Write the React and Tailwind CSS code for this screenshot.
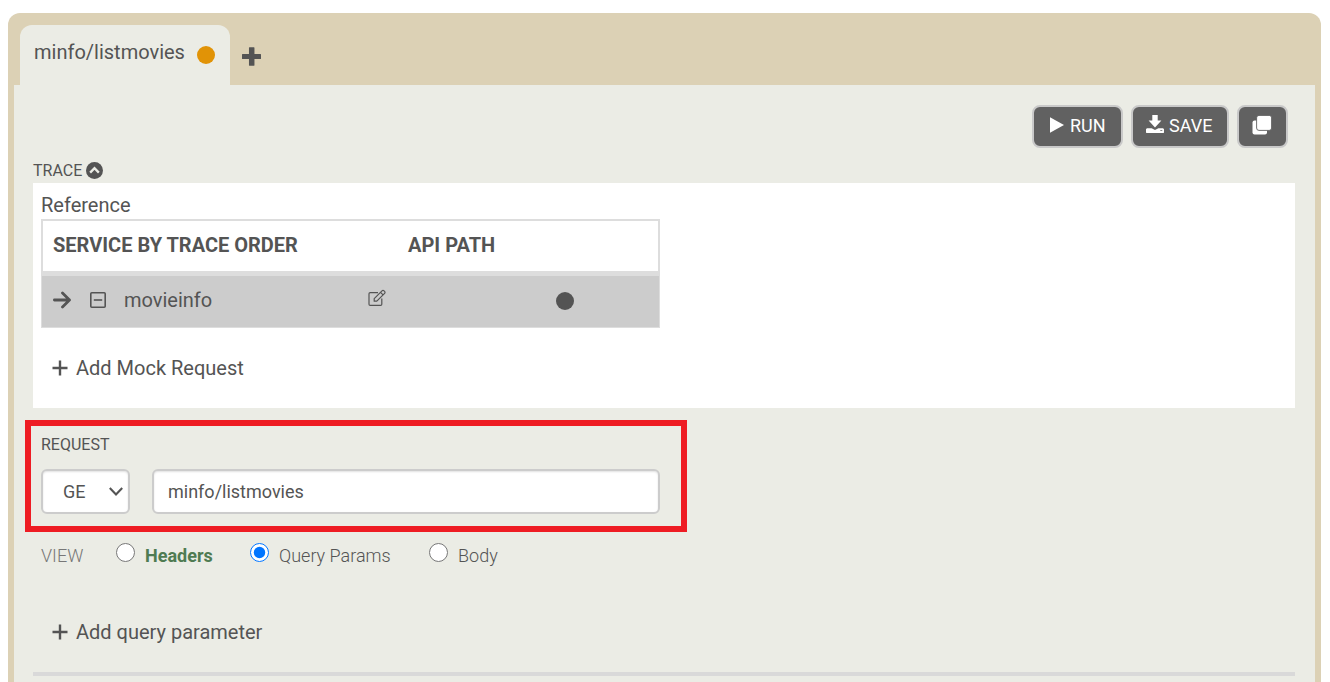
import React, { useState } from "react";

function PlusIcon({ className, weight }) {
  return (
    <svg viewBox="0 0 16 16" className={className} fill="none" stroke="currentColor" strokeWidth={weight} aria-hidden="true">
      <path d="M8 0.5v15M0.5 8h15" />
    </svg>
  );
}

function ThickPlusIcon() {
  return (
    <svg viewBox="0 0 18 18" className="size-[19px]" fill="currentColor" aria-hidden="true">
      <path d="M7 0.3h4.4a.4.4 0 0 1 .4.4V6.6h5.7a.5.5 0 0 1 .5.5v3.8a.5.5 0 0 1-.5.5h-5.7v6a.4.4 0 0 1-.4.4H7a.4.4 0 0 1-.4-.4v-6H.5a.5.5 0 0 1-.5-.5V7.1a.5.5 0 0 1 .5-.5h6.1V.7A.4.4 0 0 1 7 .3z" />
    </svg>
  );
}

function ToolButton({ label, children, className }) {
  return (
    <button
      type="button"
      aria-label={label}
      className={
        "flex h-[43px] items-center rounded-lg border-2 border-[#c9c9c9] bg-[#616161] pb-0.5 text-lg leading-6 text-white " + className
      }
    >
      {children}
    </button>
  );
}

function AddButton({ children }) {
  return (
    <button type="button" className="flex items-center gap-2 text-xl leading-7">
      <PlusIcon className="size-4" weight="2.4" />
      {children}
    </button>
  );
}

const views = [
  { id: "headers", label: "Headers", text: "font-bold text-[#4f7b52]", width: "w-[134px]" },
  { id: "query", label: "Query Params", text: "font-light", width: "w-[179px]" },
  { id: "body", label: "Body", text: "font-light", width: "" },
];

export default function App() {
  const [view, setView] = useState("query");
  const [path, setPath] = useState("minfo/listmovies");

  return (
    <div className="min-h-screen bg-white pt-[13px] pr-[9px] pl-2 font-['Roboto','Liberation_Sans',sans-serif] text-[#545454]">
      <div className="rounded-t-xl bg-[#dcd1b5] px-1.5 pt-3">
        <nav className="flex h-[60px] pl-1.5">
          <button type="button" className="flex w-[210px] items-center justify-between rounded-t-xl bg-[#ebece5] pr-[15px] pl-[14px] text-xl leading-6">
            <span className="pb-1.5">minfo/listmovies</span>
            <span className="size-[18px] rounded-full bg-[#e19306]" />
          </button>
          <button type="button" aria-label="New tab" className="px-3 pt-[3px]">
            <ThickPlusIcon />
          </button>
        </nav>

        <main className="bg-[#ebece5] pt-5 pr-5 pb-[6px] pl-[19px]">
          <div className="flex justify-end gap-2 pr-[7px]">
            <ToolButton className="w-[91px] gap-1.5 pl-4">
              <svg viewBox="0 0 14 16" className="mb-0.5 h-4 w-[14px]" fill="currentColor" aria-hidden="true">
                <path d="M0 .2v15.6L14 8z" />
              </svg>
              RUN
            </ToolButton>
            <ToolButton className="w-[98px] gap-[5px] pl-[13px]">
              <svg viewBox="0 0 18 18" className="mb-1 size-[18px]" fill="currentColor" aria-hidden="true">
                <path d="M6.3 0h5.4v5.6h3.7L9 12.4 2.6 5.6h3.7z" />
                <path fillRule="evenodd" d="M.9 13.2h4.7L9 15l3.4-1.8h4.7l.9 1v3.2l-.5.6H.5l-.5-.6v-3.2zM14.3 15.2v.8h2v-.8z" />
              </svg>
              SAVE
            </ToolButton>
            <ToolButton label="Duplicate" className="w-[51px] justify-center">
              <svg viewBox="0 0 20 20" className="mr-0.5 mb-0.5 size-5" aria-hidden="true">
                <rect x="0.5" y="5.5" width="14.5" height="14" rx="2" fill="white" />
                <rect x="4.6" y="0.4" width="15" height="15" rx="2.4" fill="white" stroke="#616161" strokeWidth="0.9" />
              </svg>
            </ToolButton>
          </div>

          <button type="button" className="mt-[11px] flex h-6 items-center gap-1 text-base leading-6">
            TRACE
            <svg viewBox="0 0 18 18" className="mb-0.5 size-[17px]" aria-hidden="true">
              <circle cx="9" cy="9" r="9" fill="currentColor" />
              <path d="M4.4 11.2 9 6.6l4.6 4.6" fill="none" stroke="#ebece5" strokeWidth="2.5" />
            </svg>
          </button>

          <section className="h-[225px] bg-white px-2 pt-2">
            <h2 className="text-xl leading-7">Reference</h2>
            <table className="w-[619px] table-fixed border-separate border-spacing-0 border border-[#ddd] text-left text-xl leading-7">
              <colgroup>
                <col className="w-[356px]" />
                <col className="w-[147px]" />
                <col />
              </colgroup>
              <thead>
                <tr className="h-14">
                  <th className="border-t border-b-[5px] border-l border-[#ddd] px-2.5 pb-0.5 font-bold">SERVICE BY TRACE ORDER</th>
                  <th className="border-t border-b-[5px] border-[#ddd] px-2.5 pb-0.5 font-bold">API PATH</th>
                  <th className="border-t border-r border-b-[5px] border-[#ddd]" aria-label="Status" />
                </tr>
              </thead>
              <tbody>
                <tr className="h-[51px] bg-[#ccc]">
                  <td className="px-[11px] pb-1">
                    <div className="flex items-center">
                      <svg viewBox="0 0 18 18" className="size-[18px]" fill="none" stroke="currentColor" strokeWidth="2.8" strokeLinecap="round" strokeLinejoin="round" aria-hidden="true">
                        <path d="M1.4 9h15M9.5 2l7 7-7 7" />
                      </svg>
                      <svg viewBox="0 0 16 16" className="ml-[19px] size-4" fill="none" stroke="currentColor" strokeWidth="1.6" aria-hidden="true">
                        <rect x="0.8" y="0.8" width="14.4" height="14.4" rx="1" />
                        <path d="M3.8 8h8.4" />
                      </svg>
                      <span className="ml-[18px]">movieinfo</span>
                      <svg viewBox="0 0 18 18" className="mr-px mb-1 ml-auto size-[18px]" fill="none" stroke="currentColor" strokeWidth="1.2" strokeLinejoin="round" aria-hidden="true">
                        <path d="M10 3.6H2.2A1.2 1.2 0 0 0 1 4.8v10.4a1.2 1.2 0 0 0 1.2 1.2h10.4a1.2 1.2 0 0 0 1.2-1.2V9.6" />
                        <path d="M6.2 12.2V9.6L14 1.8a1.4 1.4 0 0 1 2 0l.6.6a1.4 1.4 0 0 1 0 2L8.8 12.2zM12.5 3.3l2.6 2.6" />
                      </svg>
                    </div>
                  </td>
                  <td />
                  <td className="px-[11px] pb-0.5">
                    <span className="block size-[18px] rounded-full bg-[#545454]" />
                  </td>
                </tr>
              </tbody>
            </table>
            <div className="pt-[26px] pl-[11px]">
              <AddButton>Add Mock Request</AddButton>
            </div>
          </section>

          <section className="mt-3 -ml-2 h-28 w-[662px] border-[6px] border-[#ee1c23] px-2.5 pt-[7px]">
            <h2 className="text-base leading-6">REQUEST</h2>
            <div className="mt-3 flex gap-[22px] pr-[11px] text-lg">
              <div className="relative w-[89px]">
                <select aria-label="Method" className="h-[45px] w-full appearance-none rounded-md border-2 border-[#ccc] bg-white pl-5 shadow-[inset_0_1px_2px_rgba(0,0,0,0.12)]">
                  <option>GE</option>
                </select>
                <svg viewBox="0 0 14 9" className="pointer-events-none absolute top-[18px] right-[7px] h-[9px] w-[14px]" fill="none" stroke="currentColor" strokeWidth="2.1" aria-hidden="true">
                  <path d="M.8 1 7 7.4 13.2 1" />
                </svg>
              </div>
              <input
                aria-label="Request path"
                value={path}
                onChange={(e) => setPath(e.target.value)}
                className="h-[45px] min-w-0 flex-1 rounded-md border-2 border-[#ccc] bg-white px-[14px] shadow-[inset_0_1px_2px_rgba(0,0,0,0.12)]"
              />
            </div>
          </section>

          <fieldset className="mt-2.5 flex h-7 items-center pl-2 text-lg">
            <span className="w-[75px] font-light text-[#777]">VIEW</span>
            {views.map((v) => (
              <label key={v.id} className={"flex items-center gap-2.5 " + v.width}>
                <input type="radio" name="view" checked={view === v.id} onChange={() => setView(v.id)} className="mb-2 size-[19px]" />
                <span className={v.text}>{v.label}</span>
              </label>
            ))}
          </fieldset>

          <div className="mt-12 pl-[19px]">
            <AddButton>Add query parameter</AddButton>
          </div>
          <hr className="mt-[26px] border-t-4 border-[#d9d9d9]" />
        </main>
      </div>
    </div>
  );
}
